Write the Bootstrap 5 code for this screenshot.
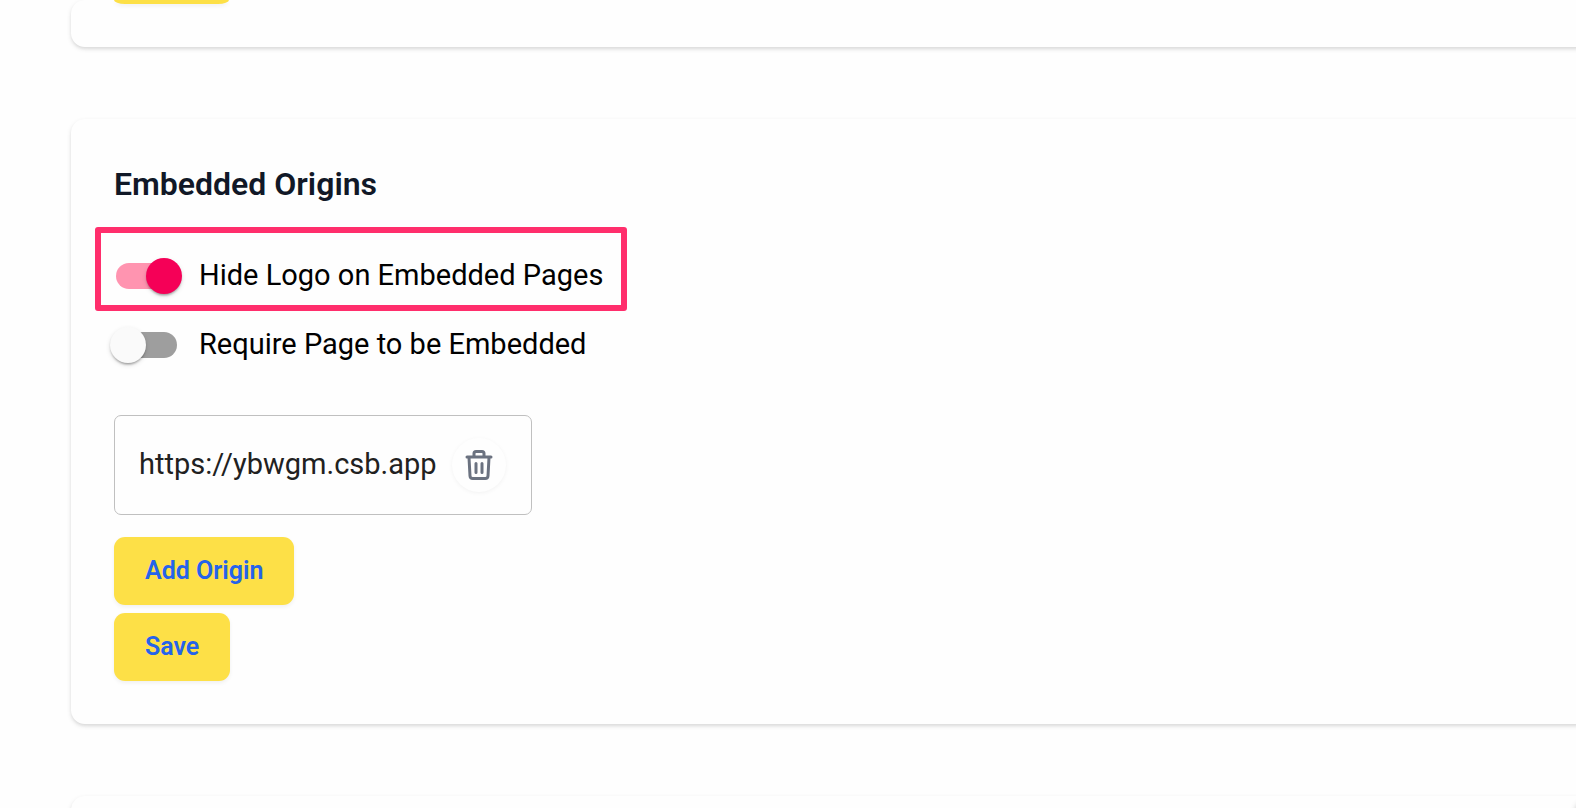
<!DOCTYPE html>
<html lang="en">
<head>
<meta charset="utf-8">
<meta name="viewport" content="width=device-width, initial-scale=1">
<title>Embedded Origins</title>
<link href="https://cdn.jsdelivr.net/npm/bootstrap@5.3.0/dist/css/bootstrap.min.css" rel="stylesheet">
<style>
  body { font-family: Roboto, "Liberation Sans", sans-serif; background: #fefefe; color: #000; overflow: hidden; height: 100vh; }
  .page-stack { padding-left: 71px; margin-right: -16px; gap: 72px; height: 100vh; overflow: hidden; }
  .panel {
    background: #fefefe; border: 0; border-radius: 14px; padding: 43px; flex: none;
    box-shadow: 0 2px 5px rgba(0,0,0,.1), 0 2px 3px rgba(0,0,0,.06);
  }
  .panel-top { padding-top: 0; padding-bottom: 43px; }
  .panel-top-end { width: 115px; height: 4px; background: #fde047; border-radius: 0 0 11px 11px / 0 0 4px 4px; box-shadow: 0 2px 4px rgba(0,0,0,.06); }
  .panel-title { font-size: 32px; line-height: 44px; font-weight: 600; color: #111827; margin: 0 0 35px; }
  .btn-sun {
    --bs-btn-bg: #fde047; --bs-btn-color: #2563eb;
    --bs-btn-hover-bg: #facc15; --bs-btn-hover-color: #2563eb;
    --bs-btn-active-bg: #facc15; --bs-btn-active-color: #2563eb;
    --bs-btn-border-width: 0; --bs-btn-border-radius: 11px;
    --bs-btn-padding-x: 31px; --bs-btn-padding-y: 16px;
    --bs-btn-font-size: 25px; --bs-btn-font-weight: 600; --bs-btn-line-height: 36px;
    box-shadow: 0 2px 4px rgba(0,0,0,.06);
  }
  .toggle-row { height: 69px; font-size: 29px; }
  .toggle-input {
    appearance: none; position: relative; flex: none; margin: 0 22px 0 2px;
    width: 61px; height: 26px; border-radius: 13px; background: #9e9e9e;
  }
  .toggle-input::before {
    content: ""; position: absolute; left: -6px; top: -5px; width: 36px; height: 36px;
    border-radius: 50%; background: #fafafa;
    box-shadow: 0 3px 2px -2px rgba(0,0,0,.2), 0 2px 2px rgba(0,0,0,.14), 0 2px 5px rgba(0,0,0,.12);
  }
  .toggle-input:checked { background: #ff94b0; }
  .toggle-input:checked::before { left: 30px; background: #f50057; }
  .callout-frame { position: absolute; inset: -14px -24px -1px -19px; border: 6px solid #ff2e6c; border-radius: 3px; pointer-events: none; }
  .origin-chip { border: 1px solid #c0c0c0; border-radius: 7px; height: 100px; padding: 0 25px 0 24px; font-size: 29px; color: #212121; gap: 15px; margin: 36px 0 22px; }
  .btn-trash { width: 54px; height: 54px; border: 0; padding: 0; color: #6b7280; background: #fefefe; box-shadow: 0 1px 4px rgba(0,0,0,.05); }
  .corner-widget { position: fixed; right: -56px; bottom: -46px; width: 56px; height: 56px; border-radius: 14px; background: #fefefe; box-shadow: 0 2px 6px rgba(0,0,0,.3); }
</style>
</head>
<body>
<main class="page-stack d-flex flex-column">
  <section class="card panel panel-top">
    <div class="panel-top-end"></div>
  </section>

  <section class="card panel align-items-start">
    <h2 class="panel-title">Embedded Origins</h2>
    <div class="toggle-row position-relative d-flex align-items-center">
      <input class="toggle-input" type="checkbox" role="switch" id="hideLogo" checked>
      <label for="hideLogo">Hide Logo on Embedded Pages</label>
      <span class="callout-frame"></span>
    </div>
    <div class="toggle-row d-flex align-items-center">
      <input class="toggle-input" type="checkbox" role="switch" id="requireEmbed">
      <label for="requireEmbed">Require Page to be Embedded</label>
    </div>
    <div class="origin-chip d-flex align-items-center">
      <span>https://ybwgm.csb.app</span>
      <button type="button" class="btn btn-trash rounded-circle d-flex align-items-center justify-content-center" aria-label="Delete origin">
        <svg width="28" height="32" viewBox="0 0 28 32" fill="none" stroke="currentColor" stroke-width="3" stroke-linecap="round" stroke-linejoin="round">
          <path d="M2 8H26M9 8V4.500Q9 2.500 11 2.500H17Q19 2.500 19 4.500V8M4 8.500L5 27Q5.200 29.500 7.700 29.500H20.300Q22.800 29.500 23 27L24 8.500M11 14.500V23.500M17 14.500V23.500"/>
        </svg>
      </button>
    </div>
    <div class="d-flex flex-column align-items-start gap-2">
      <button type="button" class="btn btn-sun">Add Origin</button>
      <button type="button" class="btn btn-sun">Save</button>
    </div>
  </section>

  <section class="card panel"></section>
</main>
<div class="corner-widget"></div>
</body>
</html>
